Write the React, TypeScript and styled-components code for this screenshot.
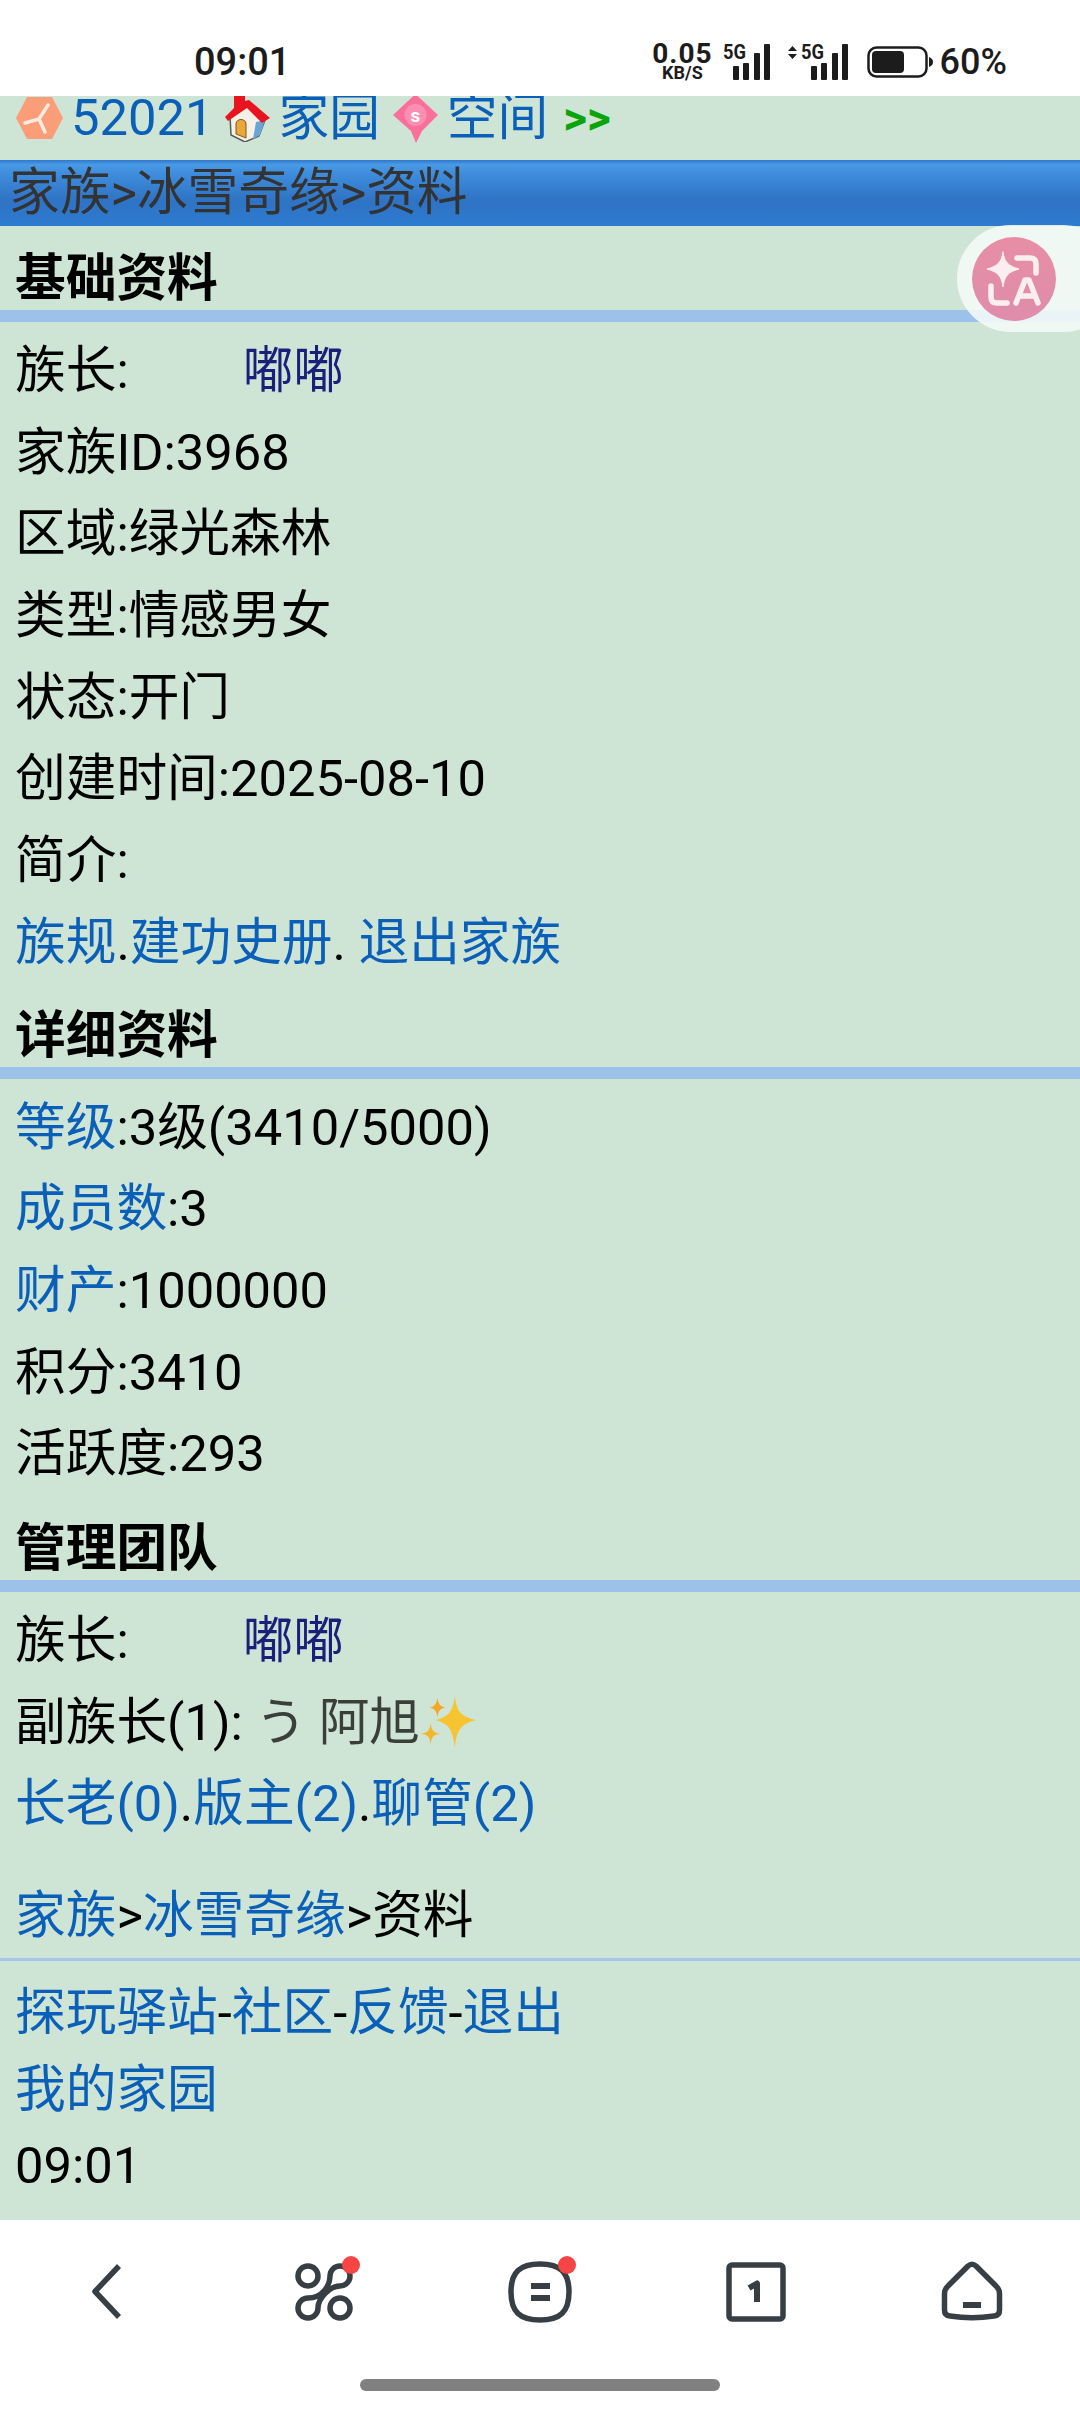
import React from 'react';
import styled, { createGlobalStyle } from 'styled-components';

const GlobalStyle = createGlobalStyle`
  html, body {
    margin: 0;
    padding: 0;
    background: #fff;
  }
  body {
    font-family: Roboto, "Noto Sans CJK SC", sans-serif;
  }
`;

const Page = styled.div`
  position: relative;
  width: 1080px;
  height: 2412px;
  overflow: hidden;
  display: flex;
  flex-direction: column;
  background: #fff;
`;

const StatusBar = styled.div`
  height: 96px;
  flex: none;
  display: flex;
  align-items: center;
  justify-content: space-between;
  padding: 28px 73px 0 194px;
  box-sizing: border-box;
  color: #1c1c1c;
`;

const Clock = styled.span`
  font-size: 38px;
  font-weight: 500;
`;

const StatusRight = styled.div`
  display: flex;
  align-items: center;
`;

const Speed = styled.div`
  display: flex;
  flex-direction: column;
  align-items: center;
  font-weight: 700;
  font-size: 28px;
  letter-spacing: 1px;
  line-height: 22px;
  margin-right: 10px;

  small {
    font-size: 18px;
    letter-spacing: 0;
    line-height: 16px;
  }
`;

const Percent = styled.span`
  font-size: 36px;
  font-weight: 500;
  margin-left: 7px;
`;

const Content = styled.div`
  height: 2124px;
  flex: none;
  background: #cee4d5;
  font-size: 50.7px;
  color: #000;
`;

const TopNav = styled.div`
  height: 64px;
  box-sizing: border-box;
  display: flex;
  align-items: center;
  padding: 0 0 20px 16px;
  overflow: hidden;
`;

const TopItem = styled.a`
  display: flex;
  align-items: center;
  color: #0a5fb8;
  line-height: 64px;
  white-space: nowrap;
`;

const More = styled.span`
  color: #0ba50b;
  font-weight: 700;
  font-size: 46px;
  margin-left: 15px;
`;

const TitleBar = styled.div`
  height: 66px;
  line-height: 66px;
  padding-left: 9px;
  color: #333;
  background: linear-gradient(#2e79cf 0, #4a9ae6 7%, #3f8ddd 20%, #2f73c4 62%, #2d7bd0 100%);
  box-sizing: border-box;
`;

const Heading = styled.div<{ $top: number }>`
  height: 52px;
  line-height: 54px;
  padding: ${(p) => p.$top}px 0 0 15px;
  font-weight: 700;
`;

const Divider = styled.div`
  height: 12px;
  margin-top: 6px;
  background: #9cc2ea;
`;

const Rows = styled.div`
  padding: 7px 0 0 15px;
`;

const Row = styled.div`
  height: 81.7px;
  line-height: 84px;
  white-space: nowrap;
`;

const Link = styled.a`
  color: #0a5fb8;
`;

const Name = styled.span`
  color: #1a1f7a;
  margin-left: 114px;
`;

const Muted = styled.span`
  color: #3a3f3a;
`;

const Crumb = styled.div`
  padding: 41px 0 0 15px;
  height: 60px;
  line-height: 62px;
`;

const ThinLine = styled.div`
  height: 3px;
  margin-top: 13px;
  background: #a5c8e8;
`;

const Footer = styled.div`
  padding: 13px 0 0 15px;
`;

const FooterRow = styled.div`
  height: 76.5px;
  line-height: 78px;
  white-space: nowrap;
`;

const BottomNav = styled.div`
  flex: 1;
  display: flex;
  flex-direction: column;
  align-items: center;
  background: #fff;
`;

const NavIcons = styled.div`
  width: 100%;
  display: grid;
  grid-template-columns: repeat(5, 216px);
  justify-items: center;
  padding-top: 40px;
`;

const NavButton = styled.div`
  position: relative;
  width: 64px;
  height: 64px;
`;

const RedDot = styled.span`
  position: absolute;
  top: -4px;
  right: -4px;
  width: 18px;
  height: 18px;
  border-radius: 50%;
  background: #f54545;
`;

const HomeBar = styled.div`
  width: 360px;
  height: 12px;
  margin-top: 55px;
  border-radius: 6px;
  background: #808080;
`;

const TranslatePill = styled.div`
  position: absolute;
  top: 225px;
  left: 957px;
  width: 160px;
  height: 107px;
  border-radius: 54px;
  background: rgba(245, 250, 247, 0.88);
  display: flex;
  align-items: center;
  padding-left: 15px;
  box-sizing: border-box;
`;

const TranslateBadge = styled.div`
  width: 84px;
  height: 84px;
  border-radius: 50%;
  background: linear-gradient(#e78ea6, #de8dab);
`;

const SignalSvg = styled.svg<{ $gap: number }>`
  margin-right: ${(p) => p.$gap}px;
  overflow: visible;
`;

const Signal = ({ arrows }: { arrows?: boolean }) => (
  <SignalSvg $gap={arrows ? 19 : 18} width={arrows ? 60 : 47} height="36" viewBox={arrows ? '0 0 60 36' : '0 0 47 36'} fill="#1c1c1c">
    {arrows && <path d="M0 7l4.500-5 4.500 5zM0 10l4.500 5 4.500-5z" />}
    <g transform={arrows ? 'translate(13 0)' : undefined}>
      <text x="0" y="15" fontSize="20" fontWeight="700" fontFamily="Roboto" textLength="23" lengthAdjust="spacingAndGlyphs">5G</text>
      <rect x="10" y="22" width="6" height="14" rx="1" />
      <rect x="20" y="19" width="6" height="17" rx="1" />
      <rect x="31" y="9" width="6" height="27" rx="1" />
      <rect x="41" y="0" width="6" height="36" rx="1" />
    </g>
  </SignalSvg>
);

const Battery = () => (
  <svg width="66" height="32" viewBox="0 0 66 32">
    <rect x="1.500" y="1.500" width="58" height="29" rx="8" fill="none" stroke="#1c1c1c" strokeWidth="2.500" />
    <rect x="5" y="5" width="32" height="22" rx="4" fill="#1c1c1c" />
    <path d="M62 11c3 1 4 3 4 5s-1 4-4 5z" fill="#1c1c1c" />
  </svg>
);

const HexIcon = () => (
  <svg width="47" height="44" viewBox="0 0 47 44" style={{ marginRight: 8 }}>
    <path d="M11 1h25l11 21-11 21H11L0 22z" fill="#fb9d78" />
    <path d="M32 9L23 23M23 23L9 27M23 23l6 13" stroke="#fdeadf" strokeWidth="3.500" strokeLinecap="round" fill="none" />
  </svg>
);

const HouseIcon = () => (
  <svg width="45" height="48" viewBox="0 0 45 48" style={{ margin: '0 8px 0 12px' }}>
    <path d="M5 22L24 10l16 16-6 16-14 6-14-7z" fill="#f6f1e6" stroke="#5a5a5a" strokeWidth="1.500" />
    <path d="M31 28l9-2-5 15-7 4z" fill="#6aa5d8" />
    <path d="M11 30c0-6 10-6 10 0v14l-10-4z" fill="#eaa83a" stroke="#7a5a20" />
    <path d="M9 0h11v7l4-1 21 18-8 5L22 14 3 27l-3-4 9-9z" fill="#e8141f" />
  </svg>
);

const DiamondIcon = () => (
  <svg width="45" height="49" viewBox="0 0 45 49" style={{ margin: '0 9px 0 13px' }}>
    <path d="M22.500 0L45 21 29 37l-6 12-5-12L0 21z" fill="#fb6f9d" />
    <circle cx="22.500" cy="21" r="11" fill="#fb8fb3" />
    <text x="22.500" y="28" textAnchor="middle" fontSize="19" fontWeight="700" fill="#fff" fontFamily="Roboto">s</text>
  </svg>
);

const SparkleIcon = () => (
  <svg width="58" height="56" viewBox="0 0 60 56" style={{ verticalAlign: '-11px' }}>
    <path d="M36 0c2 16 6 21 22 25-16 4-20 10-22 29-2-19-6-25-20-29 14-4 18-9 20-25z" fill="#f7c431" />
    <path d="M18 2c1 7 3 9 8 10-5 1-7 3-8 10-1-7-3-9-8-10 5-1 7-3 8-10z" fill="#f5a623" />
    <path d="M11 28c1 8 3 10 10 11-7 1-9 3-10 11-1-8-3-10-10-11 7-1 9-3 10-11z" fill="#f7b52c" />
  </svg>
);

const TranslateIcon = () => (
  <svg width="84" height="84" viewBox="0 0 84 84" fill="none" stroke="#fbeef1" strokeWidth="5.500" strokeLinecap="round" strokeLinejoin="round">
    <path d="M31 15c1.500 10 5 14 16 17-11 3-14.500 7-16 18-1.500-11-5-15-16-18 11-3 14.500-7 16-17z" fill="#fbeef1" strokeWidth="1" />
    <path d="M45 21h13c4 0 6 2 6 6v9" />
    <path d="M19 49v11c0 4 2 6 6 6h10" />
    <path d="M44 66l9-23h4l9 23M47 59h16" />
  </svg>
);

const navStroke = { fill: 'none', stroke: '#373e44', strokeWidth: 5.5, strokeLinecap: 'butt', strokeLinejoin: 'round' } as const;

const App: React.FC = () => (
  <Page>
    <GlobalStyle />
    <StatusBar>
      <Clock>09:01</Clock>
      <StatusRight>
        <Speed>
          0.05
          <small>KB/S</small>
        </Speed>
        <Signal />
        <Signal arrows />
        <Battery />
        <Percent>60%</Percent>
      </StatusRight>
    </StatusBar>
    <Content>
      <TopNav>
        <TopItem><HexIcon />52021</TopItem>
        <TopItem><HouseIcon />家园</TopItem>
        <TopItem><DiamondIcon />空间</TopItem>
        <More>&gt;&gt;</More>
      </TopNav>
      <TitleBar>家族&gt;冰雪奇缘&gt;资料</TitleBar>

      <Heading $top={26}>基础资料</Heading>
      <Divider />
      <Rows>
        <Row>族长:<Name>嘟嘟</Name></Row>
        <Row>家族ID:3968</Row>
        <Row>区域:绿光森林</Row>
        <Row>类型:情感男女</Row>
        <Row>状态:开门</Row>
        <Row>创建时间:2025-08-10</Row>
        <Row>简介:</Row>
        <Row><Link>族规</Link>.<Link>建功史册</Link>. <Link>退出家族</Link></Row>
      </Rows>

      <Heading $top={26}>详细资料</Heading>
      <Divider />
      <Rows>
        <Row><Link>等级</Link>:3级(3410/5000)</Row>
        <Row><Link>成员数</Link>:3</Row>
        <Row><Link>财产</Link>:1000000</Row>
        <Row>积分:3410</Row>
        <Row>活跃度:293</Row>
      </Rows>

      <Heading $top={28}>管理团队</Heading>
      <Divider />
      <Rows>
        <Row>族长:<Name>嘟嘟</Name></Row>
        <Row>副族长(1): <Muted>う 阿旭</Muted><SparkleIcon /></Row>
        <Row><Link>长老(0)</Link>.<Link>版主(2)</Link>.<Link>聊管(2)</Link></Row>
      </Rows>

      <Crumb><Link>家族</Link>&gt;<Link>冰雪奇缘</Link>&gt;资料</Crumb>
      <ThinLine />
      <Footer>
        <FooterRow><Link>探玩驿站</Link>-<Link>社区</Link>-<Link>反馈</Link>-<Link>退出</Link></FooterRow>
        <FooterRow><Link>我的家园</Link></FooterRow>
        <FooterRow>09:01</FooterRow>
      </Footer>
    </Content>
    <BottomNav>
      <NavIcons>
        <NavButton>
          <svg width="64" height="64" viewBox="0 0 64 64" {...navStroke}>
            <path d="M43 6L19 31.500 43 57" />
          </svg>
        </NavButton>
        <NavButton>
          <svg width="64" height="64" viewBox="0 0 64 64" {...navStroke}>
            <circle cx="16" cy="16" r="10" />
            <circle cx="48" cy="48" r="10" />
            <path d="M48 26A10 10 0 1 0 38 16C38 26 30 38 16 38A10 10 0 1 0 26 48C26 38 38 26 48 26Z" />
          </svg>
          <RedDot />
        </NavButton>
        <NavButton>
          <svg width="64" height="64" viewBox="0 0 64 64" {...navStroke}>
            <path d="M32 4C52 4 61 12 61 32 61 52 52 60 32 60 12 60 3 52 3 32 3 12 12 4 32 4z" />
            <path d="M23 26h19M23 38h19" strokeWidth={6} />
          </svg>
          <RedDot />
        </NavButton>
        <NavButton>
          <svg width="64" height="64" viewBox="0 0 64 64" {...navStroke}>
            <rect x="5" y="5" width="54" height="54" rx="3" />
            <path d="M25 28l8-4.500V42" strokeWidth={6} />
          </svg>
        </NavButton>
        <NavButton>
          <svg width="64" height="64" viewBox="0 0 64 64" {...navStroke}>
            <path d="M28 6Q32 2.500 36 6L56 26Q59.500 29 59.500 34V50Q59.500 55.500 54 56 32 59.500 10 56 4.500 55.500 4.500 50V34Q4.500 29 8 26Z" />
            <path d="M23 45h18" strokeWidth={6} />
          </svg>
        </NavButton>
      </NavIcons>
      <HomeBar />
    </BottomNav>
    <TranslatePill>
      <TranslateBadge>
        <TranslateIcon />
      </TranslateBadge>
    </TranslatePill>
  </Page>
);

export default App;
